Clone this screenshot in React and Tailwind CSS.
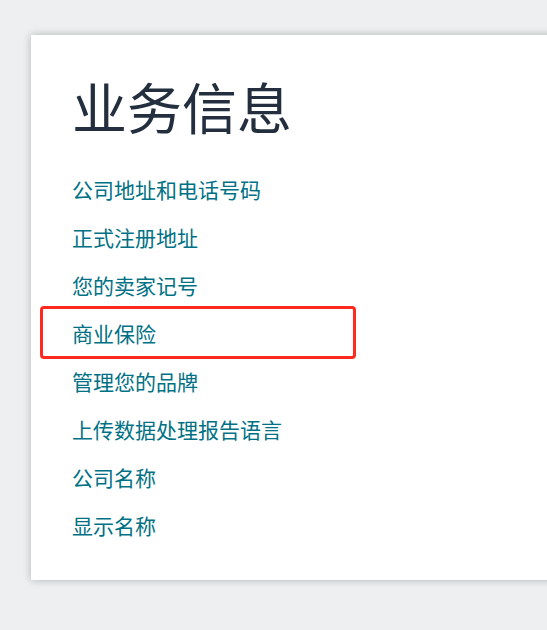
const links = [
  '公司地址和电话号码',
  '正式注册地址',
  '您的卖家记号',
  '商业保险',
  '管理您的品牌',
  '上传数据处理报告语言',
  '公司名称',
  '显示名称',
];

export default function App() {
  return (
    <div
      className="h-[630px] w-[547px] overflow-hidden bg-[#eeeff1] pt-[35px] pl-[31px]"
      style={{ fontFamily: '"Noto Sans CJK SC", "Noto Sans", sans-serif' }}
    >
      <div className="h-[545px] w-[600px] bg-white pl-[41px] pt-[38px] shadow-[0_0_8px_rgba(0,0,0,0.25)]">
        <h1 className="text-[55px] leading-[64px] font-normal text-[#232f3e]">业务信息</h1>
        <ul className="mt-[28px]">
          {links.map((l, i) => (
            <li key={l} className="relative h-[48px] leading-[48px]">
              <a className="text-[21px] text-[#007185]">{l}</a>
              {i === 3 && (
                <span className="absolute left-[-32px] top-[-3px] h-[53px] w-[316px] rounded-[4px] border-[3.5px] border-[#ff2a1f]" />
              )}
            </li>
          ))}
        </ul>
      </div>
    </div>
  );
}
